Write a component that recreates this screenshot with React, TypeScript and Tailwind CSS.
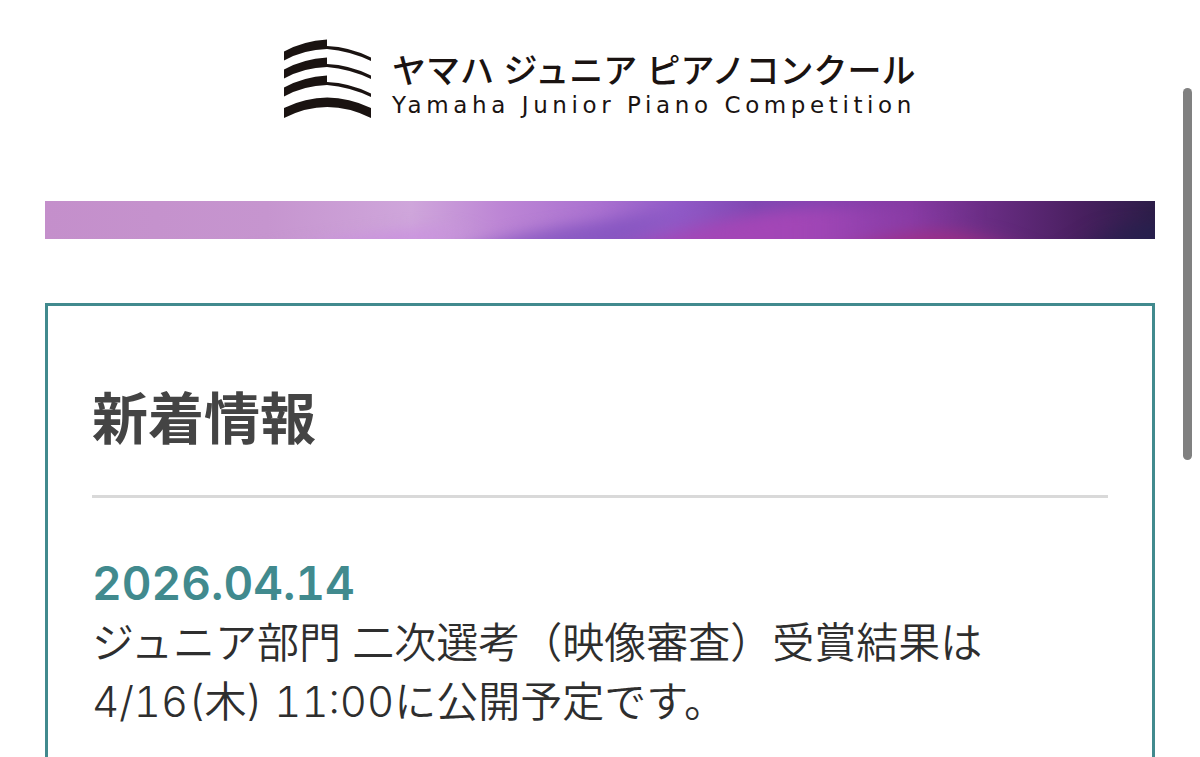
const news = [
  {
    date: "2026.04.14",
    lines: ["ジュニア部門 二次選考（映像審査）受賞結果は", "4/16(木) 11:00に公開予定です。"],
  },
];

function LogoMark() {
  return (
    <svg viewBox="0 0 88 80" className="h-20 w-[88px] shrink-0" fill="#1a1311" aria-hidden="true">
      <path d="M0 12.500 Q19 2 43 0.500 V7 Q66 8 87 18.500 V22 Q66 12 43 10 Q20 10.500 0 21.500Z" />
      <path d="M0 30.500 Q19 20 43 18.500 V25 Q66 26 87 36.500 V40 Q66 30 43 28 Q20 28.500 0 39.500Z" />
      <path d="M0 48.500 Q19 38 43 36.500 V43 Q66 44 87 54.500 V58 Q66 48 43 46 Q20 46.500 0 57.500Z" />
      <path d="M0 69 Q43 48 87 69 V79 Q43 57 0 79Z" />
    </svg>
  );
}

function Banner() {
  return (
    <svg viewBox="0 0 1110 38" preserveAspectRatio="none" className="block h-[38px] w-full" aria-hidden="true">
      <defs>
        <linearGradient id="base">
          <stop offset="0" stopColor="#c48fcb" />
          <stop offset=".2" stopColor="#c695cf" />
          <stop offset=".33" stopColor="#cfa6db" />
          <stop offset=".41" stopColor="#bd86d5" />
          <stop offset=".5" stopColor="#aa71d0" />
          <stop offset=".57" stopColor="#925bc8" />
          <stop offset=".64" stopColor="#7f47b2" />
          <stop offset=".7" stopColor="#8643b0" />
          <stop offset=".78" stopColor="#853aa2" />
          <stop offset=".86" stopColor="#652b7f" />
          <stop offset=".93" stopColor="#4a2061" />
          <stop offset="1" stopColor="#2c1d48" />
        </linearGradient>
        <linearGradient id="glow">
          <stop offset="0" stopColor="#a547b6" />
          <stop offset=".6" stopColor="#a246b6" />
          <stop offset="1" stopColor="#8a3aa4" stopOpacity="0" />
        </linearGradient>
        <filter id="soft" x="-30%" y="-80%" width="160%" height="260%" colorInterpolationFilters="sRGB">
          <feGaussianBlur stdDeviation="20 7" />
        </filter>
      </defs>
      <rect width="1110" height="38" fill="url(#base)" />
      <g filter="url(#soft)">
        <path d="M220 52 Q320 32 400 24 V52Z" fill="#c98de0" opacity=".7" />
        <path d="M400 56 Q480 28 560 20 L630 8 L580 56Z" fill="#7b4dbc" opacity=".7" />
        <path d="M560 56 Q660 16 750 8 L910 4 L890 56Z" fill="url(#glow)" />
        <path d="M780 56 Q850 28 900 28 Q940 32 980 56Z" fill="#a42d82" opacity=".7" />
        <path d="M1030 56 L1085 22 H1150 V56Z" fill="#26204f" opacity=".8" />
      </g>
    </svg>
  );
}

export default function App() {
  return (
    <div className="relative h-screen overflow-hidden bg-white px-[45px] font-[Inter,'Noto_Sans_CJK_JP',sans-serif] text-[#2e2e2e]">
      <header className="flex items-start justify-center gap-5 pt-[39px] text-[#1a1311]">
        <LogoMark />
        <h1 className="pt-3">
          <span className="block whitespace-nowrap font-['Liberation_Sans','Noto_Sans_CJK_JP',sans-serif] text-[34px] leading-10 font-medium">
            ヤマハ ジュニア ピアノコンクール
          </span>
          <span className="block whitespace-nowrap font-['DejaVu_Sans',sans-serif] text-[23px] leading-7 tracking-[0.2em]">
            Yamaha Junior Piano Competition
          </span>
        </h1>
      </header>

      <div className="mt-[82px]">
        <Banner />
      </div>

      <main className="mt-16 border-3 border-[#418a8e] px-11 pt-[77px] pb-16">
        <h2 className="border-b-3 border-[#d9d9d9] pb-10 text-[56px] leading-[72px] font-bold text-[#444444]">
          新着情報
        </h2>
        {news.map((item) => (
          <article key={item.date} className="pt-14 text-[42px] leading-[59px] tabular-nums">
            <time dateTime="2026-04-14" className="block text-[46px] font-semibold text-[#418a8e]">
              {item.date}
            </time>
            {item.lines.map((line) => (
              <p key={line} className="font-[350]">{line}</p>
            ))}
          </article>
        ))}
      </main>

      {/* overlay scroll thumb */}
      <div className="absolute top-[88px] right-2 h-[372px] w-[9px] rounded-full bg-[#808080]" />
    </div>
  );
}
